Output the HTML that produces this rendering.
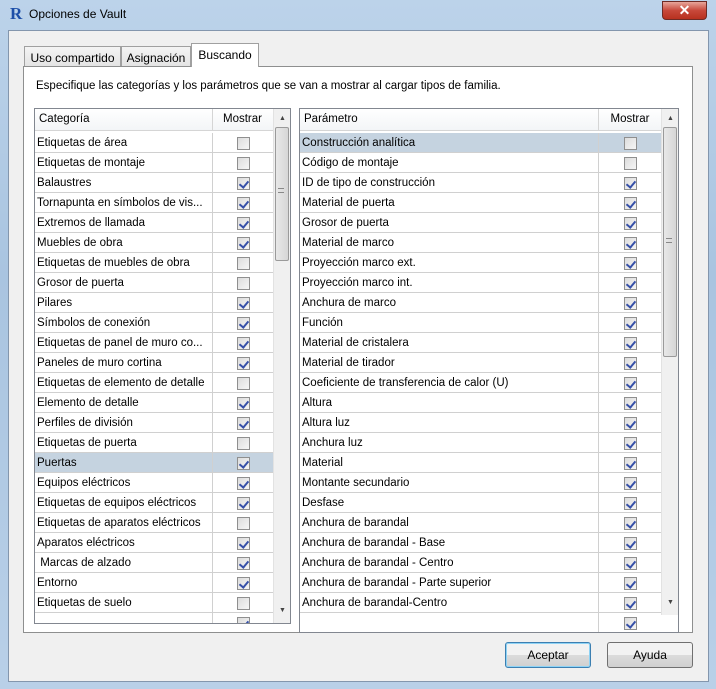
<!DOCTYPE html><html><head><meta charset="utf-8"><style>
*{box-sizing:border-box;margin:0;padding:0}
body{width:716px;height:689px;overflow:hidden;font-family:"Liberation Sans",sans-serif;font-size:11.5px;color:#000;background:linear-gradient(180deg,#bcd3ea,#a9c4e0 40%,#b9d0e8);position:relative}
.abs{position:absolute}
#client{left:8px;top:30px;width:701px;height:652px;background:#f0f0f0;border:1px solid #8396ad}
.tab{position:absolute;height:21px;border:1px solid #a0a0a0;border-bottom:none;background:linear-gradient(#f4f4f4,#e3e3e3);padding:4px 0 0;font-size:12px;white-space:nowrap;text-align:center;overflow:hidden}
#panel{left:23px;top:66px;width:670px;height:567px;background:#fff;border:1px solid #8e8f8f}
.grid{position:absolute;background:#fff;border:1px solid #828790;overflow:hidden}
.row{position:absolute;left:0;height:20px;border-bottom:1px solid #d0d0d0;line-height:21px;padding-left:2px;white-space:nowrap;overflow:hidden}
.cell{position:absolute;top:0;height:20px;border-left:1px solid #d0d0d0;background:inherit}
.sel .cell{background:#c5d3e0}
.row:not(.sel) .cell{background:#fff}
.cb{position:absolute;top:4px;width:13px;height:13px;border:1px solid #8f8f8f;background:linear-gradient(135deg,#dcdcdc,#f6f6f6)}
.cb.on::after{content:"";position:absolute;left:3px;top:1px;width:4px;height:7px;border:solid #3650a8;border-width:0 2px 2px 0;transform:rotate(40deg)}
.sel{background:#c5d3e0}
.hdr{position:absolute;left:0;top:0;height:22px;background:linear-gradient(#fff,#f3f5f7);border-bottom:1px solid #d5d5d5;line-height:21px}
.sb{position:absolute;top:0;width:17px;background:#f0f0f0;border-left:1px solid #e2e2e2}
.thumb{position:absolute;left:1px;width:14px;border:1px solid #9a9a9a;border-radius:2px;background:linear-gradient(90deg,#e8e8e8,#d6d6d6)}
.btn{position:absolute;top:642px;width:86px;height:26px;border:1px solid #707070;border-radius:3px;background:linear-gradient(#f2f2f2 50%,#dcdcdc 50%,#d0d0d0);text-align:center;line-height:24px;font-size:12px}
</style></head><body>
<div class="abs" style="left:10px;top:5px;width:14px;height:18px;color:#1d4fa8;font-weight:bold;font-size:17px;line-height:18px;font-family:'Liberation Serif',serif">R</div>
<div class="abs" style="left:29px;top:7px;font-size:12px">Opciones de Vault</div>
<div class="abs" style="left:662px;top:1px;width:45px;height:19px;border:1px solid #6e2b25;border-radius:0 0 4px 4px;background:linear-gradient(#e7a59a,#c8483a 50%,#b8311f);color:#fff;text-align:center;font-weight:bold;font-size:14px;line-height:17px">✕</div>
<div id="client" class="abs"></div>
<div class="tab" style="left:24px;top:46px;width:97px">Uso compartido</div>
<div class="tab" style="left:121px;top:46px;width:70px">Asignación</div>
<div id="panel" class="abs"></div>
<div class="tab" style="left:191px;top:43px;width:68px;height:24px;background:#fff;z-index:2;padding-top:4px">Buscando</div>
<div class="abs" style="left:36px;top:80px;font-size:11.5px">Especifique las categorías y los parámetros que se van a mostrar al cargar tipos de familia.</div>

<div class="grid" style="left:34px;top:108px;width:257px;height:516px" id="g1">
<div class="hdr" style="width:238px"><span style="position:absolute;left:4px">Categoría</span><span style="position:absolute;left:177px;width:60px;height:22px;border-left:1px solid #d5d5d5;text-align:center">Mostrar</span></div>
<div class="sb" style="left:238px;height:516px"><div class="abs" style="left:5px;top:6px;font-size:7px;color:#444">▲</div><div class="thumb" style="top:18px;height:134px"></div><div class="abs" style="left:4px;top:79px;width:6px;height:5px;border-top:1px solid #888;border-bottom:1px solid #888"></div><div class="abs" style="left:5px;top:498px;font-size:7px;color:#444">▼</div></div>
</div>
<div class="grid" style="left:299px;top:108px;width:380px;height:525px" id="g2">
<div class="hdr" style="width:361px"><span style="position:absolute;left:4px">Parámetro</span><span style="position:absolute;left:298px;width:63px;height:22px;border-left:1px solid #d5d5d5;text-align:center">Mostrar</span></div>
<div class="sb" style="left:361px;height:506px"><div class="abs" style="left:5px;top:6px;font-size:7px;color:#444">▲</div><div class="thumb" style="top:18px;height:230px"></div><div class="abs" style="left:4px;top:129px;width:6px;height:5px;border-top:1px solid #888;border-bottom:1px solid #888"></div><div class="abs" style="left:5px;top:490px;font-size:7px;color:#444">▼</div></div>
</div>
<div class="btn" style="left:505px;border-color:#3c7fb1;box-shadow:inset 0 0 0 1px #8ed3f5">Aceptar</div>
<div class="btn" style="left:607px">Ayuda</div>
<script>
const L=[["Etiquetas de área",0],["Etiquetas de montaje",0],["Balaustres",1],["Tornapunta en símbolos de vis...",1],["Extremos de llamada",1],["Muebles de obra",1],["Etiquetas de muebles de obra",0],["Grosor de puerta",0],["Pilares",1],["Símbolos de conexión",1],["Etiquetas de panel de muro co...",1],["Paneles de muro cortina",1],["Etiquetas de elemento de detalle",0],["Elemento de detalle",1],["Perfiles de división",1],["Etiquetas de puerta",0],["Puertas",1,1],["Equipos eléctricos",1],["Etiquetas de equipos eléctricos",1],["Etiquetas de aparatos eléctricos",0],["Aparatos eléctricos",1],[" Marcas de alzado",1],["Entorno",1],["Etiquetas de suelo",0],["",1]];
const R=[["Construcción analítica",0,1],["Código de montaje",0],["ID de tipo de construcción",1],["Material de puerta",1],["Grosor de puerta",1],["Material de marco",1],["Proyección marco ext.",1],["Proyección marco int.",1],["Anchura de marco",1],["Función",1],["Material de cristalera",1],["Material de tirador",1],["Coeficiente de transferencia de calor (U)",1],["Altura",1],["Altura luz",1],["Anchura luz",1],["Material",1],["Montante secundario",1],["Desfase",1],["Anchura de barandal",1],["Anchura de barandal - Base",1],["Anchura de barandal - Centro",1],["Anchura de barandal - Parte superior",1],["Anchura de barandal-Centro",1],["",1]];
function fill(id,data,w,cx,cw){const g=document.getElementById(id);data.forEach((d,i)=>{const r=document.createElement('div');r.className='row'+(d[2]?' sel':'');r.style.top=(24+i*20)+'px';r.style.width=w+'px';r.innerHTML=d[0].replace(/ /g,'&nbsp;')+'<div class="cell" style="left:'+cx+'px;width:'+cw+'px"><div class="cb'+(d[1]?' on':'')+'" style="left:'+(cw/2-7)+'px"></div></div>';g.insertBefore(r,g.children[1]);});}
fill('g1',L,238,177,61);fill('g2',R,361,298,63);
</script>
</body></html>
